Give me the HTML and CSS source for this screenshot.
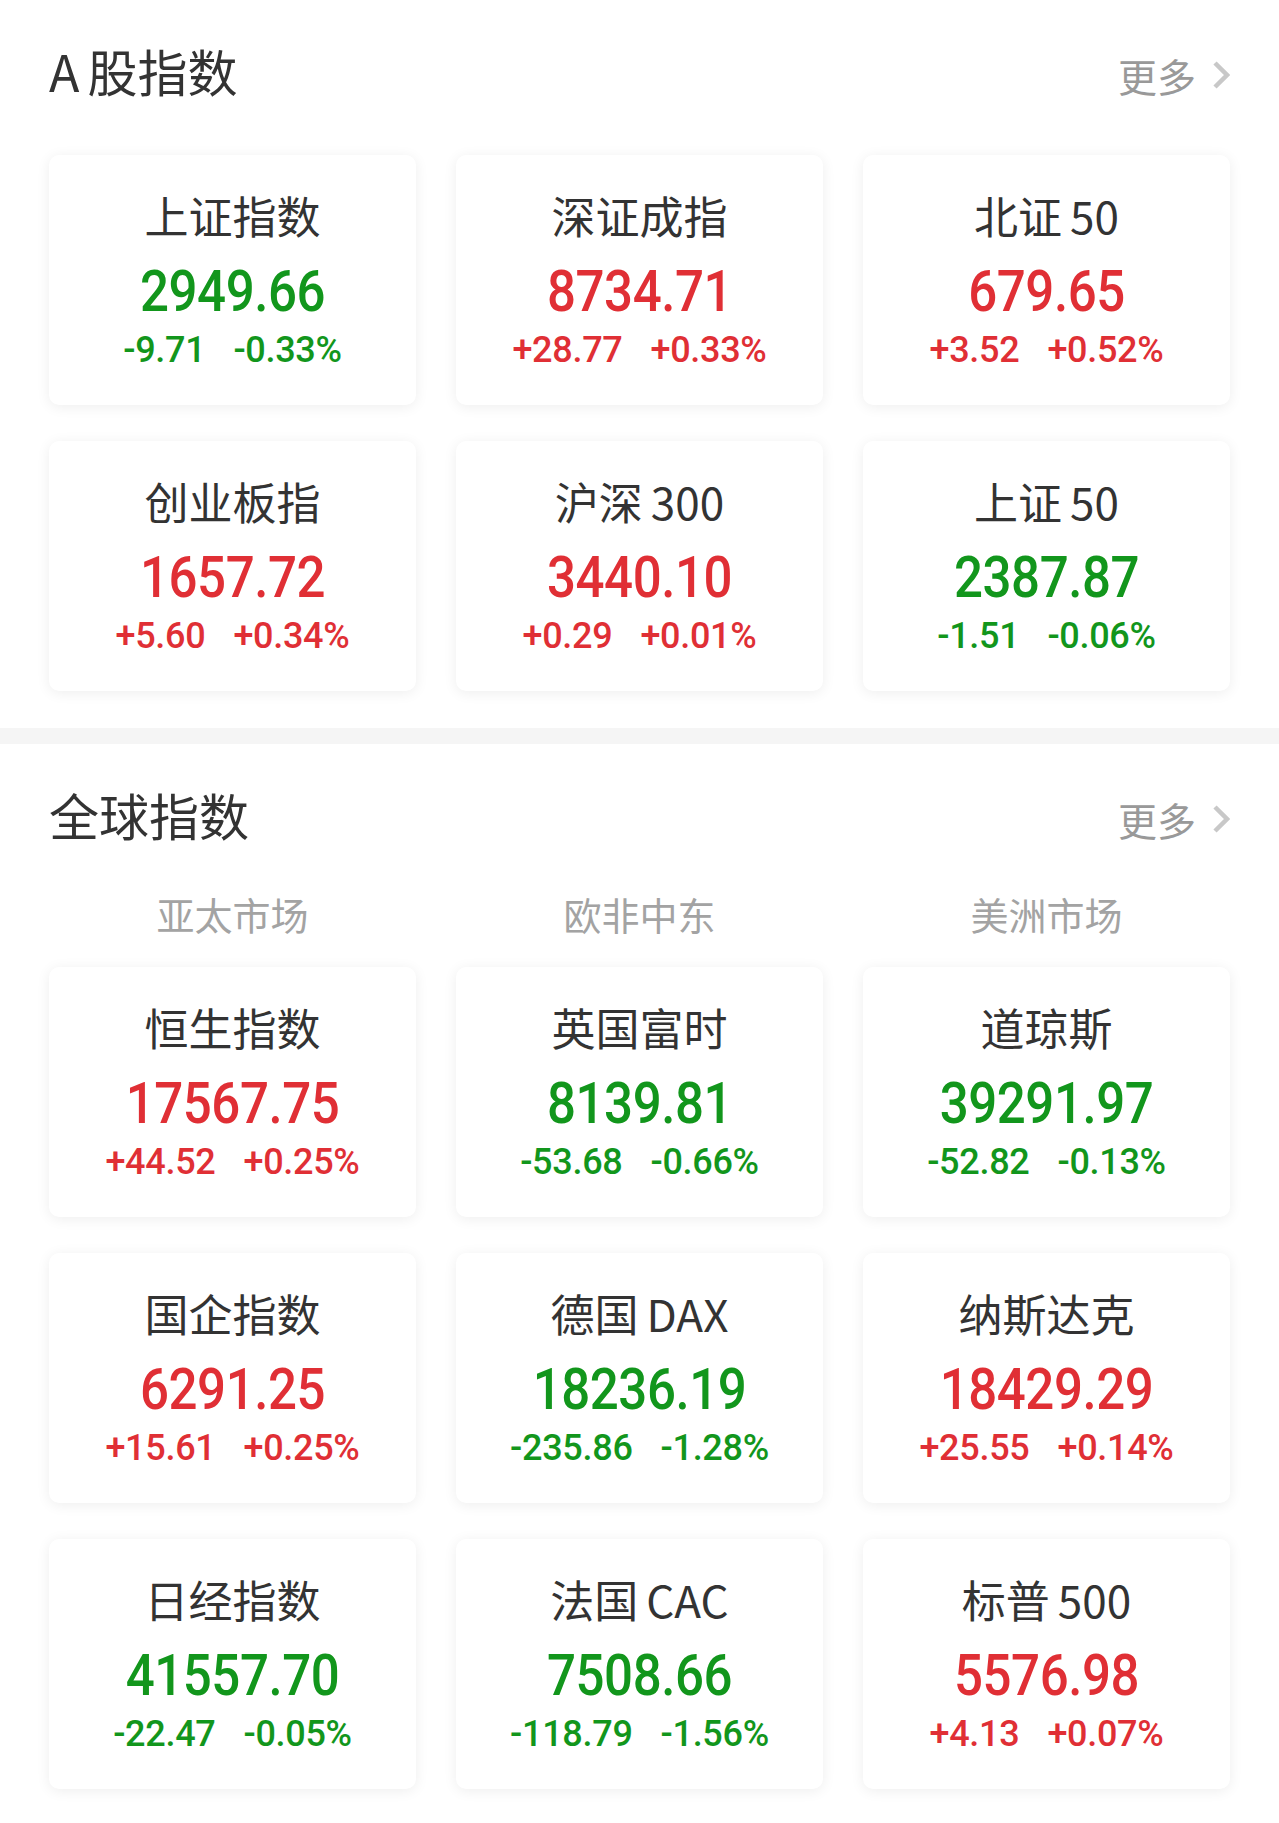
FILE: index.html
```html
<!DOCTYPE html>
<html>
<head>
<meta charset="utf-8">
<title>指数</title>
<link rel="stylesheet" href="styles.css">
</head>
<body>

<div class="section">
  <div class="section-head">
    <h2 class="section-title"><span class="latin-pre">A</span>股指数</h2>
    <a class="more" href="#">更多<svg class="chevron" viewBox="0 0 18 30"><polyline points="3,3 15,15 3,27"/></svg></a>
  </div>
  <div class="card-grid">
    <div class="index-card">
      <div class="index-name">上证指数</div>
      <div class="index-value down">2949.66</div>
      <div class="index-change down"><span>-9.71</span><span>-0.33%</span></div>
    </div>
    <div class="index-card">
      <div class="index-name">深证成指</div>
      <div class="index-value up">8734.71</div>
      <div class="index-change up"><span>+28.77</span><span>+0.33%</span></div>
    </div>
    <div class="index-card">
      <div class="index-name">北证<span class="latin">50</span></div>
      <div class="index-value up">679.65</div>
      <div class="index-change up"><span>+3.52</span><span>+0.52%</span></div>
    </div>
    <div class="index-card">
      <div class="index-name">创业板指</div>
      <div class="index-value up">1657.72</div>
      <div class="index-change up"><span>+5.60</span><span>+0.34%</span></div>
    </div>
    <div class="index-card">
      <div class="index-name">沪深<span class="latin">300</span></div>
      <div class="index-value up">3440.10</div>
      <div class="index-change up"><span>+0.29</span><span>+0.01%</span></div>
    </div>
    <div class="index-card">
      <div class="index-name">上证<span class="latin">50</span></div>
      <div class="index-value down">2387.87</div>
      <div class="index-change down"><span>-1.51</span><span>-0.06%</span></div>
    </div>
  </div>
</div>

<div class="divider"></div>

<div class="section">
  <div class="section-head">
    <h2 class="section-title">全球指数</h2>
    <a class="more" href="#">更多<svg class="chevron" viewBox="0 0 18 30"><polyline points="3,3 15,15 3,27"/></svg></a>
  </div>
  <div class="market-tabs">
    <span>亚太市场</span>
    <span>欧非中东</span>
    <span>美洲市场</span>
  </div>
  <div class="card-grid">
    <div class="index-card">
      <div class="index-name">恒生指数</div>
      <div class="index-value up">17567.75</div>
      <div class="index-change up"><span>+44.52</span><span>+0.25%</span></div>
    </div>
    <div class="index-card">
      <div class="index-name">英国富时</div>
      <div class="index-value down">8139.81</div>
      <div class="index-change down"><span>-53.68</span><span>-0.66%</span></div>
    </div>
    <div class="index-card">
      <div class="index-name">道琼斯</div>
      <div class="index-value down">39291.97</div>
      <div class="index-change down"><span>-52.82</span><span>-0.13%</span></div>
    </div>
    <div class="index-card">
      <div class="index-name">国企指数</div>
      <div class="index-value up">6291.25</div>
      <div class="index-change up"><span>+15.61</span><span>+0.25%</span></div>
    </div>
    <div class="index-card">
      <div class="index-name">德国<span class="latin">DAX</span></div>
      <div class="index-value down">18236.19</div>
      <div class="index-change down"><span>-235.86</span><span>-1.28%</span></div>
    </div>
    <div class="index-card">
      <div class="index-name">纳斯达克</div>
      <div class="index-value up">18429.29</div>
      <div class="index-change up"><span>+25.55</span><span>+0.14%</span></div>
    </div>
    <div class="index-card">
      <div class="index-name">日经指数</div>
      <div class="index-value down">41557.70</div>
      <div class="index-change down"><span>-22.47</span><span>-0.05%</span></div>
    </div>
    <div class="index-card">
      <div class="index-name">法国<span class="latin">CAC</span></div>
      <div class="index-value down">7508.66</div>
      <div class="index-change down"><span>-118.79</span><span>-1.56%</span></div>
    </div>
    <div class="index-card">
      <div class="index-name">标普<span class="latin">500</span></div>
      <div class="index-value up">5576.98</div>
      <div class="index-change up"><span>+4.13</span><span>+0.07%</span></div>
    </div>
  </div>
</div>

</body>
</html>
```

FILE: styles.css
```css
body {
  margin: 0;
  background: #fff;
  font-family: "Noto Sans CJK SC", "Noto Sans", sans-serif;
  color: #333;
}

.section {
  padding: 0 49px 37px;
}

.section-head {
  height: 140px;
  display: flex;
  align-items: center;
  justify-content: space-between;
}

.section-title {
  margin: 0;
  font-size: 50px;
  font-weight: 400;
  line-height: 60px;
  color: #333;
}

.latin-pre {
  margin-right: 8px;
}

.latin {
  margin-left: 8px;
}

.more {
  display: flex;
  align-items: center;
  margin-top: 10px;
  font-size: 39px;
  line-height: 46px;
  color: #999;
  text-decoration: none;
}

.chevron {
  width: 18px;
  height: 30px;
  margin-left: 16px;
}

.chevron polyline {
  fill: none;
  stroke: #c8c8c8;
  stroke-width: 4.5;
}

.market-tabs {
  display: grid;
  grid-template-columns: repeat(3, 1fr);
  column-gap: 40px;
  padding-top: 8px;
  margin-bottom: 31px;
  font-size: 38px;
  line-height: 44px;
  color: #a3a3a3;
  text-align: center;
}

.card-grid {
  display: grid;
  grid-template-columns: repeat(3, 1fr);
  column-gap: 40px;
  row-gap: 36px;
  margin-top: 15px;
}

.market-tabs + .card-grid {
  margin-top: 0;
}

.index-card {
  height: 250px;
  box-sizing: border-box;
  padding-top: 35px;
  background: #fff;
  border-radius: 10px;
  box-shadow: 0 2px 14px rgba(0, 0, 0, 0.07);
  text-align: center;
}

.index-name {
  font-size: 44px;
  line-height: 50px;
  color: #333;
}

/* condensed look of the app's number font */
.index-value {
  margin-top: 19px;
  font-family: Roboto, "Liberation Sans", sans-serif;
  font-size: 58px;
  font-weight: 500;
  line-height: 64px;
  letter-spacing: -0.5px;
  transform: scaleX(0.88);
}

.index-change {
  display: flex;
  justify-content: center;
  gap: 28px;
  margin-top: 7px;
  font-family: Roboto, "Liberation Sans", sans-serif;
  font-size: 36px;
  font-weight: 500;
  line-height: 40px;
  letter-spacing: -0.3px;
}

.up {
  color: #e02f35;
}

.down {
  color: #12961c;
}

.divider {
  height: 16px;
  background: #f5f5f5;
}
```
